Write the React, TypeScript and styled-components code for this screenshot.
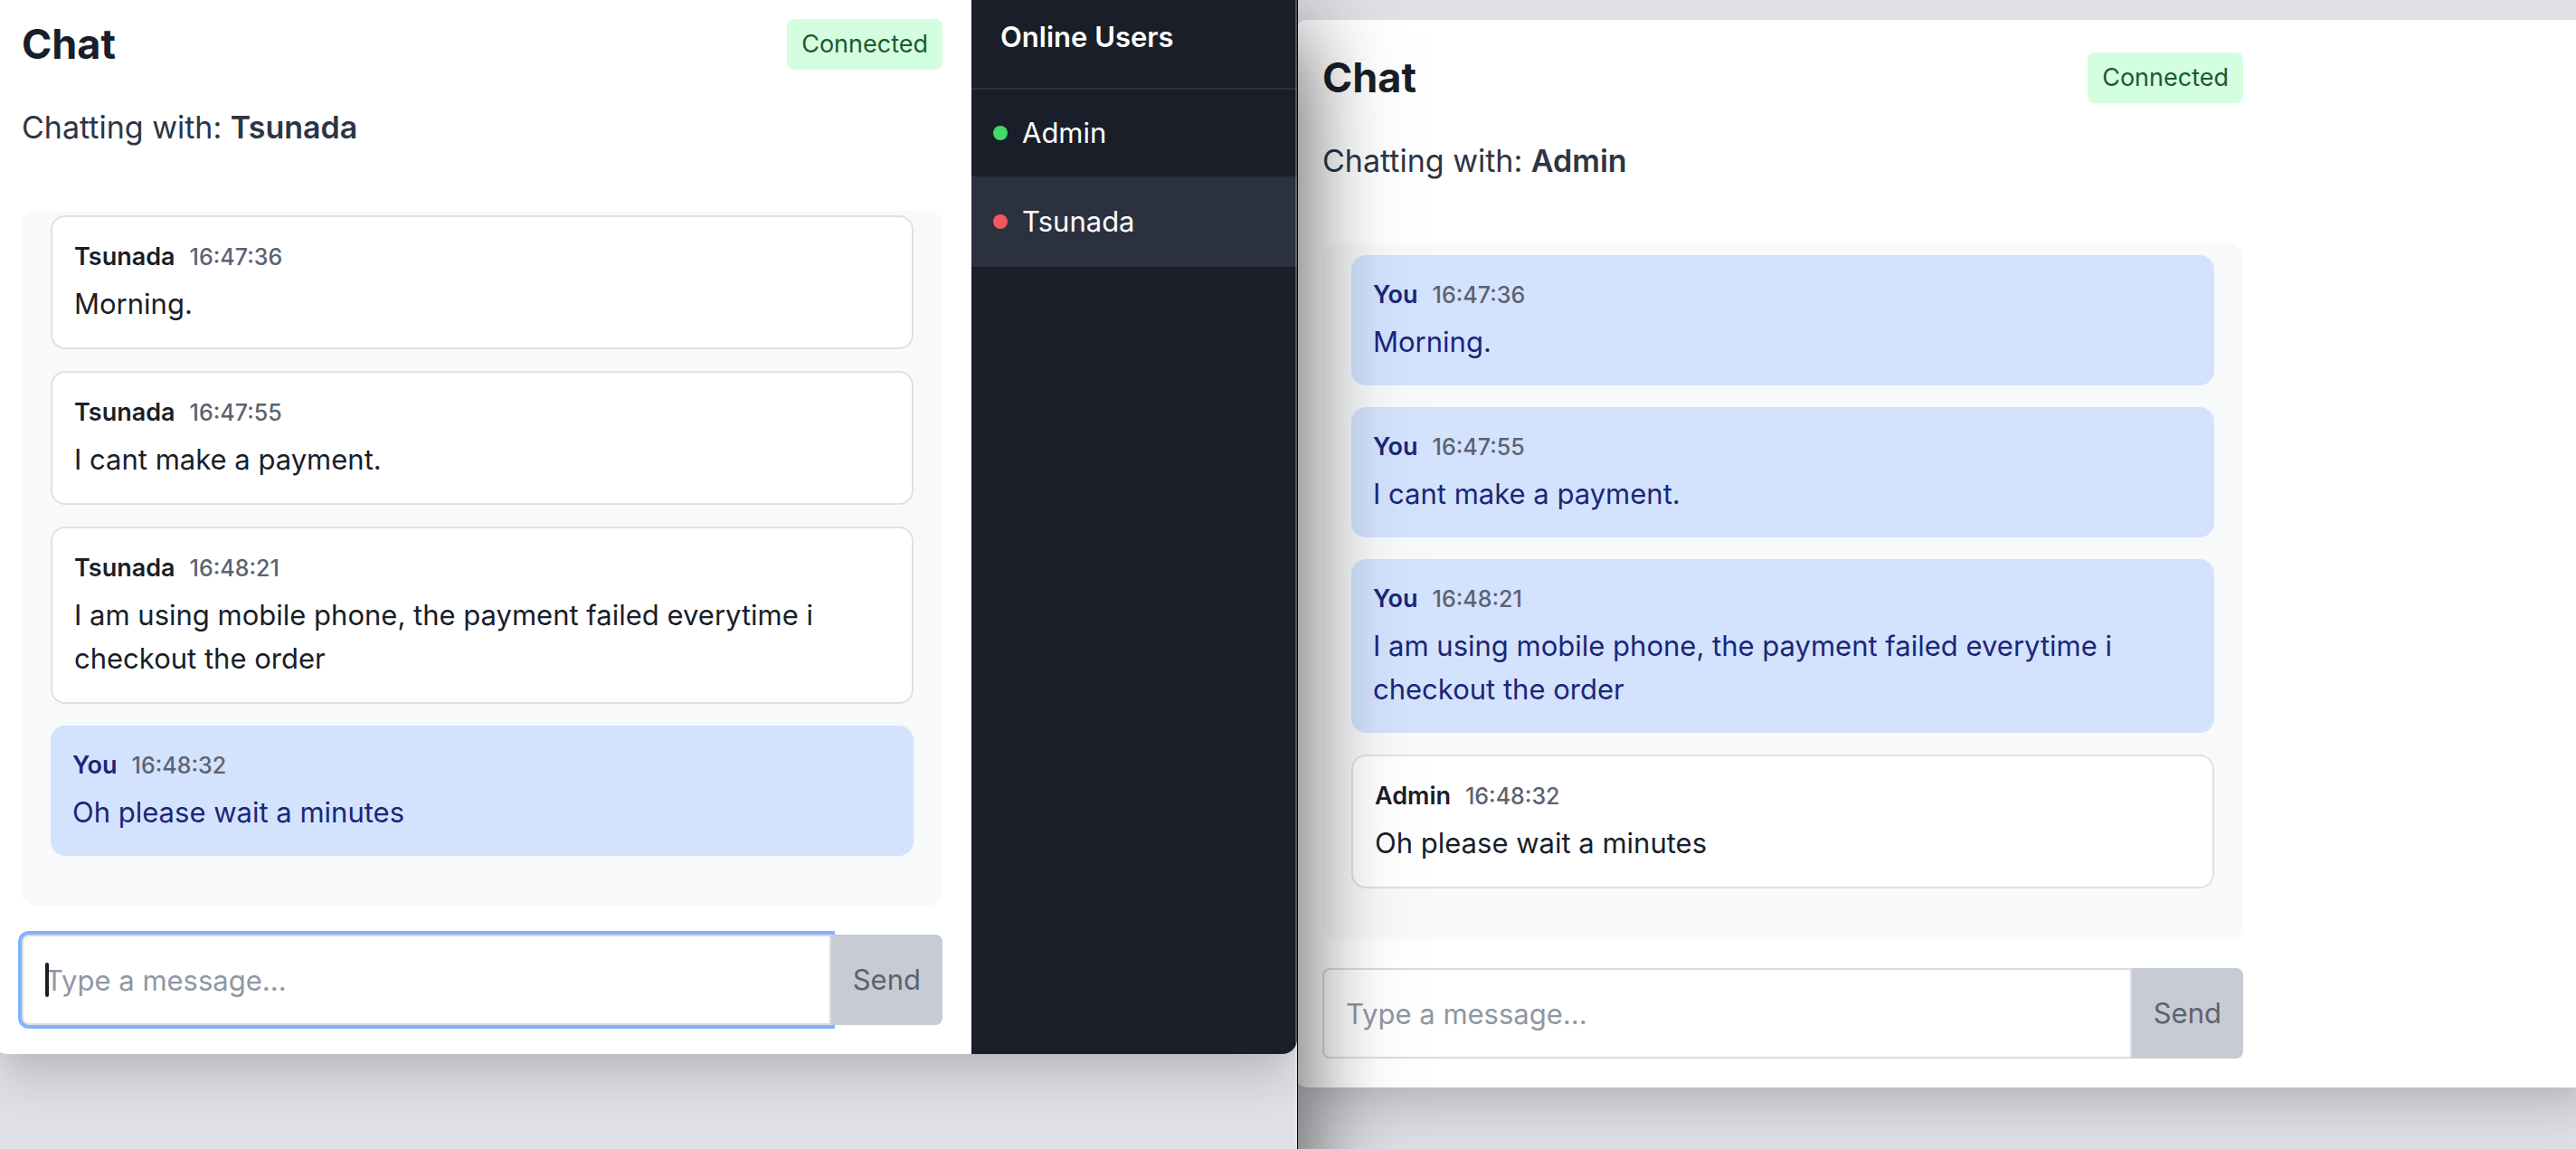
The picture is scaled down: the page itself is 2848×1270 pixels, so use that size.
import React, { useState } from 'react';
import styled, { createGlobalStyle, css } from 'styled-components';

const GlobalStyle = createGlobalStyle`
  *, *::before, *::after { box-sizing: border-box; }
  body {
    margin: 0;
    background: #dfe1e6;
    color: #191e29;
    font-family: Inter, "Liberation Sans", sans-serif;
    font-size: 31px;
    line-height: 48px;
    -webkit-font-smoothing: antialiased;
  }
  h1, h2, p, ul { margin: 0; padding: 0; }
`;

const Desktop = styled.main`
  display: grid;
  grid-template-columns: 1435fr 1413fr;
  min-height: 100vh;
  overflow: hidden;
`;

const Pane = styled.section`
  min-width: 0;
  overflow: hidden;
  background: #dfe1e6;
`;

/* The pane in front: a dark edge, a light inner rim and a shadow over its neighbour. */
const FrontPane = styled(Pane)`
  position: relative;
  z-index: 1;
  overflow: visible;
  border-right: 1px solid #000;
  clip-path: inset(0 -160px 0 0);

  &::before {
    content: '';
    position: absolute;
    z-index: -1;
    inset: 0 -1px -200px 0;
    box-shadow: 0 36px 100px rgba(0, 0, 0, 0.7);
  }

  &::after {
    content: '';
    position: absolute;
    inset: 0 0 0 auto;
    width: 2px;
    background: rgba(255, 255, 255, 0.24);
  }
`;

const Viewport = styled.div`
  display: flow-root;
  height: 100%;
  overflow: hidden;
`;

const AppWindow = styled.div<{ $scrolled?: boolean }>`
  display: flex;
  width: ${({ $scrolled }) => ($scrolled ? 'calc(100% + 8px)' : 'calc(100% + 29px)')};
  margin: ${({ $scrolled }) => ($scrolled ? '-15px 0 0 -8px' : '22px 0 0 -5px')};
  overflow: hidden;
  border-radius: 16px;
  background: #fff;
  box-shadow: 0 40px 50px -10px rgba(0, 0, 0, 0.14), 0 20px 20px -10px rgba(0, 0, 0, 0.04);
`;

const ChatColumn = styled.div`
  flex: 1;
  min-width: 0;
  padding: 32px;
`;

const TitleRow = styled.header`
  display: flex;
  align-items: center;
  justify-content: space-between;
  margin-bottom: 32px;
`;

const Title = styled.h1`
  font-size: 45px;
  line-height: 64px;
  font-weight: 700;
`;

const Badge = styled.span`
  padding: 8px 16px;
  border-radius: 8px;
  background: #d4fee0;
  color: #1c5a2f;
  font-size: 27px;
  line-height: 40px;
`;

const Partner = styled.p`
  margin-bottom: 64px;
  color: #2d3545;
  font-size: 34px;
  line-height: 56px;
  strong { font-weight: 600; }
`;

const MessageList = styled.ul<{ $scrolled?: boolean }>`
  display: flex;
  flex-direction: column;
  gap: 24px;
  margin-bottom: 32px;
  padding: ${({ $scrolled }) => ($scrolled ? '5px 32px 55px' : '12px 32px 56px')};
  border-radius: 16px;
  background: #f8f9fb;
  list-style: none;
`;

const Message = styled.li<{ $own: boolean }>`
  padding: 24px;
  border-radius: 16px;
  ${({ $own }) =>
    $own
      ? css`
          background: #d3e3fe;
          color: #1b2678;
        `
      : css`
          border: 2px solid #dfe1e7;
          background: #fff;
        `}
`;

const MessageHead = styled.div`
  display: flex;
  align-items: baseline;
  gap: 16px;
  margin-bottom: 8px;
  font-size: 27px;
  line-height: 40px;
  font-weight: 600;
`;

const Time = styled.time`
  color: #5d6270;
  font-size: 25px;
  line-height: 32px;
  font-weight: 500;
`;

const Composer = styled.form`
  display: flex;
`;

const InputWrap = styled.label`
  position: relative;
  display: flex;
  flex: 1;
  min-width: 0;
`;

const MessageInput = styled.input<{ $focused?: boolean }>`
  flex: 1;
  min-width: 0;
  height: 100px;
  padding: 24px;
  border: 2px solid #dcdce0;
  border-radius: 8px 0 0 8px;
  outline: none;
  background: #fff;
  color: inherit;
  font: inherit;
  box-shadow: ${({ $focused }) => ($focused ? '0 0 0 4px #80b3fb' : 'none')};
  &::placeholder { color: #9097a3; opacity: 1; }
`;

const Caret = styled.span`
  position: absolute;
  top: 31px;
  left: 26px;
  width: 4px;
  height: 38px;
  border-radius: 2px;
  background: #191e29;
`;

const SendButton = styled.button`
  position: relative;
  padding: 0 24px;
  border: 0;
  border-radius: 0 8px 8px 0;
  background: #c7cbd4;
  color: #5d6270;
  font: inherit;
`;

const Sidebar = styled.aside`
  flex: none;
  width: 360px;
  background: #191e29;
  color: #fff;
`;

const EmptySidebar = styled.aside`
  flex: none;
  width: 360px;
`;

const SidebarTitle = styled.h2`
  padding: 32px;
  border-bottom: 2px solid #2c3140;
  font-size: 31px;
  line-height: 48px;
  font-weight: 600;
`;

const UserList = styled.ul`
  list-style: none;
`;

const UserRow = styled.li<{ $active?: boolean }>`
  border-bottom: 2px solid #2c3140;
  background: ${({ $active }) => ($active ? '#2c3140' : 'transparent')};
`;

const UserButton = styled.button`
  display: flex;
  align-items: center;
  gap: 16px;
  width: 100%;
  padding: 24px;
  border: 0;
  background: none;
  color: inherit;
  font: inherit;
`;

const Dot = styled.span<{ $online: boolean }>`
  width: 16px;
  height: 16px;
  border-radius: 50%;
  background: ${({ $online }) => ($online ? '#42d96c' : '#f4585f')};
`;

type Entry = { from: string; time: string; text: string };

const history: Entry[] = [
  { from: 'Tsunada', time: '16:47:36', text: 'Morning.' },
  { from: 'Tsunada', time: '16:47:55', text: 'I cant make a payment.' },
  {
    from: 'Tsunada',
    time: '16:48:21',
    text: 'I am using mobile phone, the payment failed everytime i checkout the order',
  },
  { from: 'Admin', time: '16:48:32', text: 'Oh please wait a minutes' },
];

const users = [
  { name: 'Admin', online: true },
  { name: 'Tsunada', online: false },
];

type ChatProps = { me: string; partner: string; scrolled?: boolean; focused?: boolean };

function Chat({ me, partner, scrolled, focused }: ChatProps) {
  const [draft, setDraft] = useState('');
  return (
    <ChatColumn>
      <TitleRow>
        <Title>Chat</Title>
        <Badge>Connected</Badge>
      </TitleRow>
      <Partner>
        Chatting with: <strong>{partner}</strong>
      </Partner>
      <MessageList $scrolled={scrolled}>
        {history.map((entry) => (
          <Message key={entry.time} $own={entry.from === me}>
            <MessageHead>
              <span>{entry.from === me ? 'You' : entry.from}</span>
              <Time>{entry.time}</Time>
            </MessageHead>
            <p>{entry.text}</p>
          </Message>
        ))}
      </MessageList>
      <Composer onSubmit={(event) => event.preventDefault()}>
        <InputWrap>
          <MessageInput
            aria-label="Message"
            placeholder="Type a message..."
            value={draft}
            onChange={(event) => setDraft(event.target.value)}
            $focused={focused}
          />
          {focused && <Caret />}
        </InputWrap>
        <SendButton type="submit">Send</SendButton>
      </Composer>
    </ChatColumn>
  );
}

export default function App() {
  return (
    <>
      <GlobalStyle />
      <Desktop>
        <FrontPane>
          <Viewport>
            <AppWindow $scrolled>
              <Chat me="Admin" partner="Tsunada" scrolled focused />
              <Sidebar>
                <SidebarTitle>Online Users</SidebarTitle>
                <UserList>
                  {users.map((user) => (
                    <UserRow key={user.name} $active={user.name === 'Tsunada'}>
                      <UserButton type="button">
                        <Dot $online={user.online} />
                        {user.name}
                      </UserButton>
                    </UserRow>
                  ))}
                </UserList>
              </Sidebar>
            </AppWindow>
          </Viewport>
        </FrontPane>
        <Pane>
          <Viewport>
            <AppWindow>
              <Chat me="Tsunada" partner="Admin" />
              <EmptySidebar />
            </AppWindow>
          </Viewport>
        </Pane>
      </Desktop>
    </>
  );
}
